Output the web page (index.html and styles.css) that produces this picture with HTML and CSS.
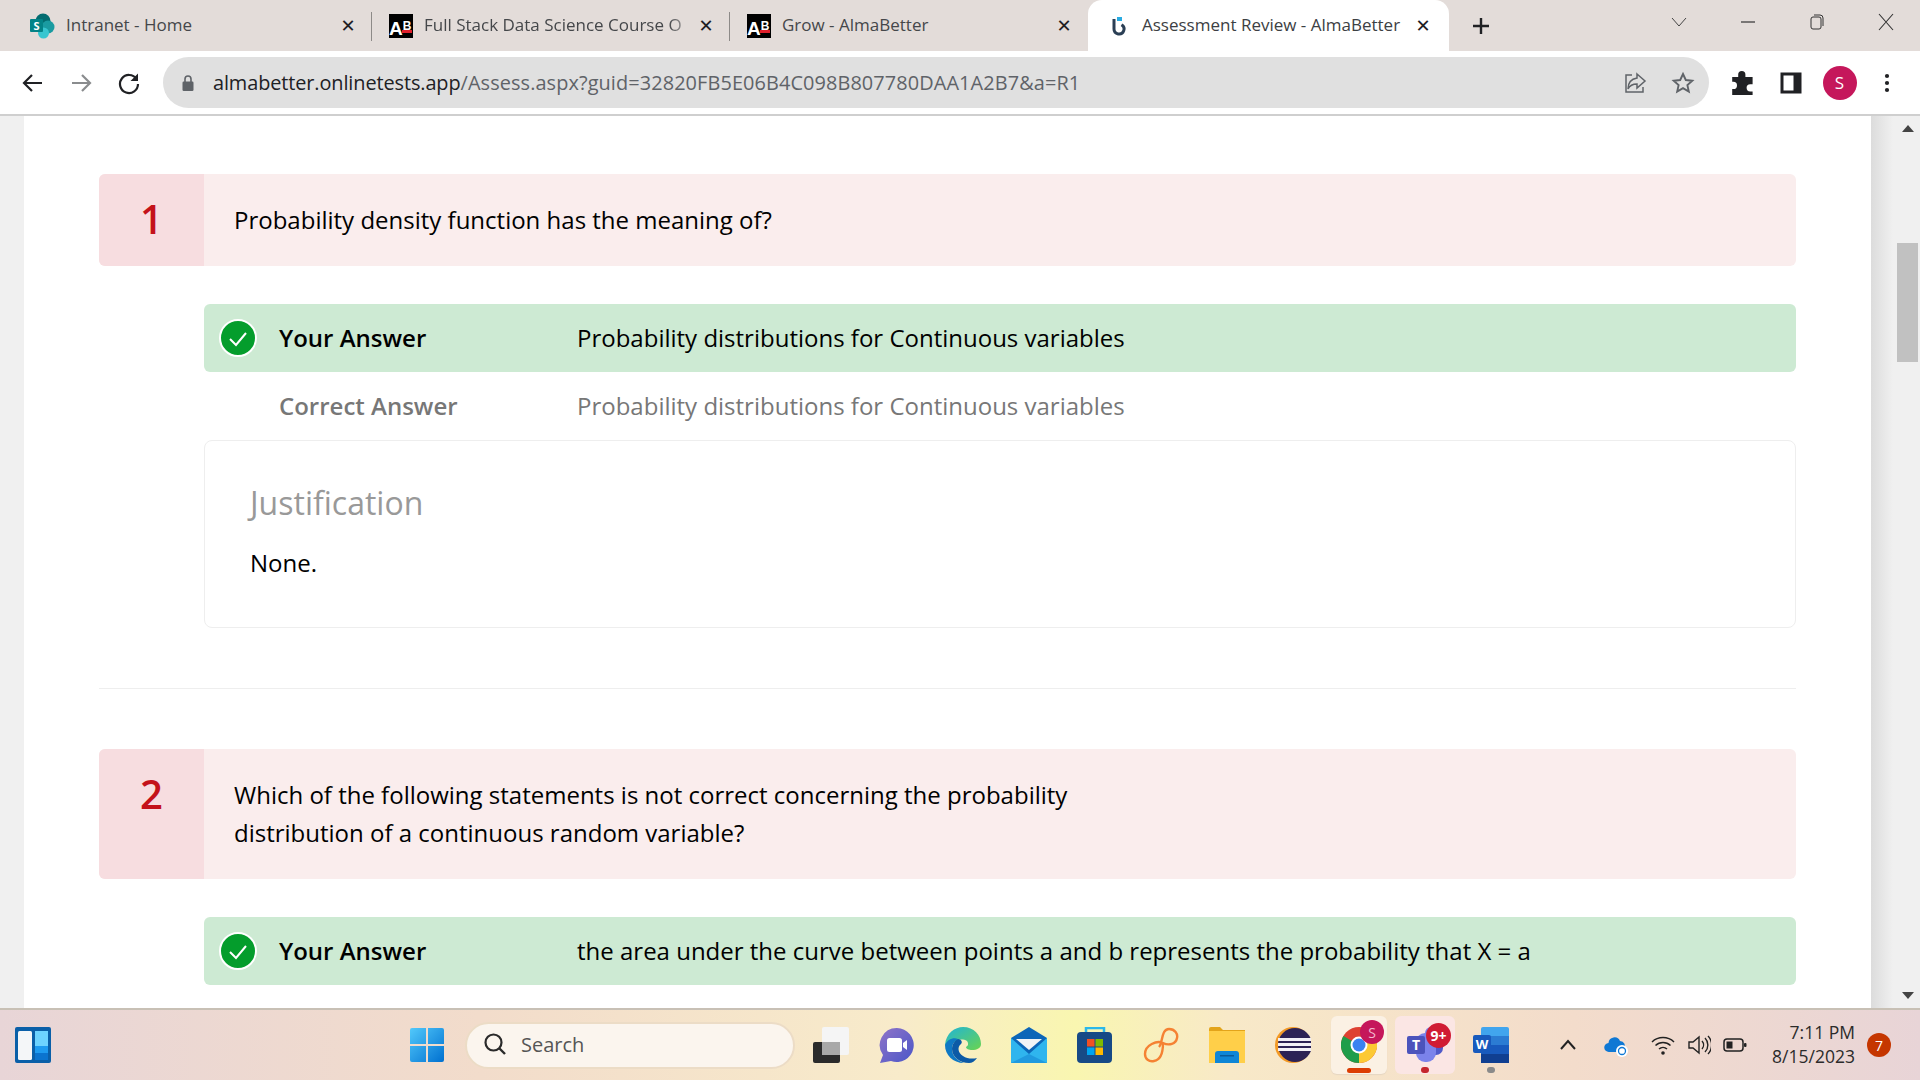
FILE: index.html
```html
<!DOCTYPE html>
<html lang="en">
<head>
    <meta charset="UTF-8">
    <title>Assessment Review - AlmaBetter</title>
    <link rel="stylesheet" href="styles.css">
</head>
<body>
    <div class="tab-strip">
        <div class="tab">
            <svg class="favicon" viewBox="0 0 26 26"><circle cx="14" cy="8" r="7.5" fill="#036c70"/><circle cx="19" cy="14" r="6.5" fill="#1a9ba1"/><circle cx="14.5" cy="20" r="5.5" fill="#37c6d0"/><rect x="1" y="6" width="13" height="13" rx="1" fill="#038387"/><text x="7.5" y="16.5" class="svg-letter" font-size="11" fill="#fff">S</text></svg>
            <span class="tab-title">Intranet - Home</span>
            <span class="tab-close">✕</span>
        </div>
        <div class="tab">
            <span class="ab-icon">A<span class="ab-b">B</span></span>
            <span class="tab-title fade">Full Stack Data Science Course O</span>
            <span class="tab-close">✕</span>
        </div>
        <div class="tab no-sep">
            <span class="ab-icon">A<span class="ab-b">B</span></span>
            <span class="tab-title">Grow - AlmaBetter</span>
            <span class="tab-close">✕</span>
        </div>
        <div class="tab active">
            <svg class="favicon small" viewBox="0 0 16 20"><path d="M3 3v10a5 5 0 1 0 7.500-4.300" fill="none" stroke="#2b3f55" stroke-width="3"/><rect x="6" y="1" width="5" height="4" fill="#29abe2"/></svg>
            <span class="tab-title">Assessment Review - AlmaBetter</span>
            <span class="tab-close">✕</span>
        </div>
        <svg class="new-tab" viewBox="0 0 20 20"><path d="M10 2v16M2 10h16" stroke="#202124" stroke-width="2.4"/></svg>
        <div class="window-controls">
            <svg class="win-chevron" viewBox="0 0 16 10"><path d="M1 1l7 8 7-8" fill="none" stroke="#444" stroke-width="1"/></svg>
            <svg class="win-btn" viewBox="0 0 18 18"><path d="M2 9h14" stroke="#333" stroke-width="1.2"/></svg>
            <svg class="win-btn" viewBox="0 0 18 18"><rect x="3" y="4" width="10" height="12" rx="2" fill="none" stroke="#333"/><path d="M6 2h6a3 3 0 0 1 3 3v8" fill="none" stroke="#333"/></svg>
            <svg class="win-btn" viewBox="0 0 18 18"><path d="M2 1l14 16M16 1L2 17" stroke="#333" stroke-width="1.1"/></svg>
        </div>
    </div>

    <div class="toolbar">
        <div class="tool-btn"><svg viewBox="0 0 24 24"><path d="M21 12H4M11 4l-8 8 8 8" fill="none" stroke="#202124" stroke-width="2.2"/></svg></div>
        <div class="tool-btn"><svg viewBox="0 0 24 24"><path d="M3 12h17M13 4l8 8-8 8" fill="none" stroke="#8a8c8e" stroke-width="2.2"/></svg></div>
        <div class="tool-btn"><svg viewBox="0 0 24 24"><path d="M19.5 8A9 9 0 1 0 21 13" fill="none" stroke="#202124" stroke-width="2.2"/><path d="M21 2.5V10h-7.5z" fill="#202124"/></svg></div>
        <div class="address-bar">
            <svg class="lock" viewBox="0 0 14 18"><path d="M4 8V5a3 3 0 0 1 6 0v3" fill="none" stroke="#5f6368" stroke-width="1.6"/><rect x="1.5" y="7.5" width="11" height="9.5" rx="1.2" fill="#5f6368"/></svg>
            <span class="url"><span class="url-host">almabetter.onlinetests.app</span>/Assess.aspx?guid=32820FB5E06B4C098B807780DAA1A2B7&amp;a=R1</span>
            <div class="tool-btn"><svg viewBox="0 0 24 24"><path d="M9 4H3v17h17v-5" fill="none" stroke="#5f6368" stroke-width="1.5"/><path d="M14 3l8 7-8 7v-4c-4 0-7 1-9 5 0-6 3-10 9-11z" fill="none" stroke="#5f6368" stroke-width="1.5"/></svg></div>
            <div class="tool-btn"><svg viewBox="0 0 24 24"><path d="M12 3l2.8 6 6.5.7-4.9 4.4 1.4 6.4L12 17.200l-5.800 3.300 1.400-6.400-4.900-4.400 6.500-.7z" fill="none" stroke="#5f6368" stroke-width="1.900"/></svg></div>
        </div>
        <div class="tool-btn"><svg viewBox="2 2 20 20"><path d="M3 7h5V5a3 3 0 0 1 6 0v2h6v6h-2a3 3 0 0 0 0 6h2v3H3v-5h1a3 3 0 0 0 0-6H3z" fill="#202124"/></svg></div>
        <div class="tool-btn"><svg viewBox="0 0 24 24"><rect x="1.500" y="1.500" width="21" height="21" fill="#202124"/><rect x="4.500" y="4.500" width="10" height="15" fill="#fff"/></svg></div>
        <div class="tool-btn"><span class="avatar">S</span></div>
        <div class="tool-btn"><svg viewBox="0 0 24 24"><circle cx="12" cy="5" r="2.100" fill="#202124"/><circle cx="12" cy="12" r="2.100" fill="#202124"/><circle cx="12" cy="19" r="2.100" fill="#202124"/></svg></div>
    </div>

    <div class="viewport">
        <div class="gutter"></div>
        <div class="page">
            <div class="question">
                <div class="q-num">1</div>
                <div class="q-text">Probability density function has the meaning of?</div>
            </div>
            <div class="answers">
                <div class="answer-row picked">
                    <div class="answer-icon"><svg viewBox="0 0 38 38"><circle cx="19" cy="19" r="18" fill="#049d2c" stroke="#fff" stroke-width="2"/><path d="M11 20l6 6 10-12" fill="none" stroke="#fff" stroke-width="2"/></svg></div>
                    <div class="answer-label">Your Answer</div>
                    <div class="answer-value">Probability distributions for Continuous variables</div>
                </div>
                <div class="answer-row correct">
                    <div class="answer-icon"></div>
                    <div class="answer-label">Correct Answer</div>
                    <div class="answer-value">Probability distributions for Continuous variables</div>
                </div>
                <div class="justification">
                    <h3>Justification</h3>
                    <p>None.</p>
                </div>
            </div>
            <hr class="divider">
            <div class="question">
                <div class="q-num">2</div>
                <div class="q-text">Which of the following statements is not correct concerning the probability<br>distribution of a continuous random variable?</div>
            </div>
            <div class="answers">
                <div class="answer-row picked">
                    <div class="answer-icon"><svg viewBox="0 0 38 38"><circle cx="19" cy="19" r="18" fill="#049d2c" stroke="#fff" stroke-width="2"/><path d="M11 20l6 6 10-12" fill="none" stroke="#fff" stroke-width="2"/></svg></div>
                    <div class="answer-label">Your Answer</div>
                    <div class="answer-value">the area under the curve between points a and b represents the probability that X = a</div>
                </div>
            </div>
        </div>
        <div class="scrollbar">
            <span class="arrow up"></span>
            <div class="thumb"></div>
            <span class="arrow down"></span>
        </div>
    </div>

    <div class="taskbar">
        <svg class="widgets" viewBox="0 0 36 36"><rect width="36" height="36" rx="2" fill="#0a5fa8"/><rect x="3" y="4" width="14" height="29" rx="1.500" fill="#f4f6f8"/><rect x="20" y="4" width="13" height="15" fill="#6dd3ff"/><rect x="20" y="19" width="13" height="7" fill="#1e9bf0"/><rect x="20" y="26" width="13" height="7" fill="#0b74cf"/></svg>
        <div class="slot start">
            <svg class="app" viewBox="0 0 36 36"><defs><linearGradient id="win" x1="0" y1="0" x2="1" y2="1"><stop offset="0" stop-color="#52c9fb"/><stop offset="1" stop-color="#0070d0"/></linearGradient></defs><path d="M1 3a2 2 0 0 1 2-2h14v16H1zM19 1h14a2 2 0 0 1 2 2v14H19zM1 19h16v16H3a2 2 0 0 1-2-2zM19 19h16v14a2 2 0 0 1-2 2H19z" fill="url(#win)"/></svg>
        </div>
        <div class="search-box">
            <svg viewBox="0 0 24 24"><circle cx="10.500" cy="10.500" r="8" fill="none" stroke="#2a2a2a" stroke-width="2.200"/><path d="M16.500 16.500l5.500 5.500" stroke="#2a2a2a" stroke-width="2.400"/></svg>
            <span>Search</span>
        </div>
        <div class="slot"><svg class="app" viewBox="0 0 36 36"><rect x="0" y="15" width="27" height="21" rx="2" fill="#2b2b2b"/><rect x="9" y="0" width="27" height="28" rx="2" fill="#f5f5f5"/><rect x="9" y="15" width="18" height="13" fill="#a8a8a8"/></svg></div>
        <div class="slot"><svg class="app" viewBox="0 0 36 36"><defs><linearGradient id="chat" x1="0" y1="0" x2="1" y2="1"><stop offset="0" stop-color="#8f74c8"/><stop offset="1" stop-color="#4a56c8"/></linearGradient></defs><path d="M18 1a17 17 0 1 1-6 33l-11 2 3-8A17 17 0 0 1 18 1z" fill="url(#chat)"/><rect x="8" y="11" width="15" height="14" rx="2.500" fill="#fff"/><path d="M24 16l4-3v10l-4-3z" fill="#fff"/></svg></div>
        <div class="slot"><svg class="app" viewBox="0 0 36 36"><defs><linearGradient id="edge" x1="0" y1="0" x2="1" y2="1"><stop offset="0" stop-color="#1fb4d8"/><stop offset="1" stop-color="#6ad44f"/></linearGradient></defs><path d="M0 18C1 6 10 0 18 0c11 0 18 8 18 17 0 4-4 6-9 6-3 0-6-1-6-3 2-1 3-3 1-6-5-3-12-1-15 3z" fill="url(#edge)"/><path d="M0 18c2-5 8-8 13-6-4 2-6 6-6 10 0 6 4 11 12 14C8 36 0 28 0 18z" fill="#0f78c4"/><path d="M13 12c-4 2-6 6-6 10 0 8 8 14 17 14 3 0 6-2 8-5-4 1-10 1-14-2-5-3-6-9-2-12 2-2 0-5-3-5z" fill="#0c5aa6"/></svg></div>
        <div class="slot"><svg class="app" viewBox="0 0 36 36"><path d="M18 0l18 11v25H0V11z" fill="#0c66b8"/><path d="M5 12h26l-13 11z" fill="#f2f4f6"/><path d="M0 11l18 16 18-16v25H0z" fill="#2fb5ee"/><path d="M0 36l18-9 18 9z" fill="#1a8fd8" opacity=".7"/></svg></div>
        <div class="slot"><svg class="app" viewBox="0 0 36 36"><path d="M9 7V1h18v6" fill="none" stroke="#2bb8ea" stroke-width="2.500"/><rect y="5" width="35" height="31" rx="4" fill="#174a86"/><rect x="10" y="12" width="7.500" height="7.500" fill="#f25022"/><rect x="18.500" y="12" width="7.500" height="7.500" fill="#7fba00"/><rect x="10" y="20.500" width="7.500" height="7.500" fill="#00a4ef"/><rect x="18.500" y="20.500" width="7.500" height="7.500" fill="#ffb900"/></svg></div>
        <div class="slot"><svg class="app" viewBox="0 0 36 36"><path d="M16 20C20 16 18 2 26 2c6 0 9 5 8 9-1 6-8 8-14 5C14 13 2 18 2 27c0 5 4 8 9 7 6-1 9-8 9-18" fill="none" stroke="#f58233" stroke-width="2.400"/></svg></div>
        <div class="slot"><svg class="app" viewBox="0 0 36 36"><path d="M0 2a2 2 0 0 1 2-2h9l3 3h22v33H0z" fill="#e3a41a"/><rect y="4" width="36" height="32" fill="#ffcf49"/><rect x="6" y="24" width="30" height="12" fill="#ffcf49"/><path d="M6 36V27a3 3 0 0 1 3-3h18a3 3 0 0 1 3 3v9z" fill="#0f86d6"/><rect x="11" y="28" width="14" height="1.500" fill="#0a5b99"/></svg></div>
        <div class="slot"><svg class="app" viewBox="0 0 36 36"><circle cx="18" cy="18" r="18" fill="#f39a26"/><circle cx="20" cy="18" r="17" fill="#2c2255"/><rect x="3" y="11" width="33" height="3" fill="#f2f0f6"/><rect x="3" y="16" width="33" height="3" fill="#f2f0f6"/><rect x="3" y="21" width="33" height="3" fill="#f2f0f6"/></svg></div>
        <div class="slot open active-app">
            <svg class="app" viewBox="0 0 36 36"><circle cx="18" cy="18" r="18" fill="#de4132"/><path d="M18 18L33.600 9A18 18 0 0 1 18 36z" fill="#fcc934"/><path d="M18 18L18 36A18 18 0 0 1 2.400 9z" fill="#1e9d4a"/><circle cx="18" cy="18" r="8.500" fill="#fff"/><circle cx="18" cy="18" r="6.500" fill="#3b82f0"/></svg>
            <span class="badge badge-s">S</span>
            <span class="indicator wide"></span>
        </div>
        <div class="slot open teams-app">
            <svg class="app" viewBox="0 0 36 36"><circle cx="24" cy="6" r="6" fill="#7b83eb"/><rect x="19" y="8" width="17" height="20" rx="7" fill="#5059c9"/><rect x="9" y="6" width="20" height="29" rx="9" fill="#7b83eb"/><rect x="0" y="9" width="18" height="18" rx="2" fill="#4b53bc"/><text x="9" y="23" class="svg-letter" font-size="14" fill="#fff">T</text></svg>
            <span class="badge badge-nine">9+</span>
            <span class="indicator dot red"></span>
        </div>
        <div class="slot open">
            <svg class="app" viewBox="0 0 36 36"><rect x="8" y="0" width="28" height="36" rx="2" fill="#41a5ee"/><rect x="8" y="9" width="28" height="9" fill="#2b7cd3"/><rect x="8" y="18" width="28" height="9" fill="#185abd"/><rect x="8" y="27" width="28" height="9" fill="#103f91"/><rect y="8" width="18" height="18" rx="2" fill="#185abd"/><text x="9" y="22" class="svg-letter" font-size="13" fill="#fff">W</text></svg>
            <span class="indicator dot"></span>
        </div>
        <div class="tray">
            <svg class="tray-icon chevron" viewBox="0 0 24 24"><path d="M5 16l7-8 7 8" fill="none" stroke="#222" stroke-width="2"/></svg>
            <svg class="tray-icon cloud" viewBox="0 0 24 24"><path d="M5 19a4.500 4.500 0 0 1-.5-9A6 6 0 0 1 16 8a5 5 0 0 1 4 8v3z" fill="#0f78d4"/><circle cx="18" cy="18" r="6" fill="#fff"/><circle cx="18" cy="18" r="3.500" fill="none" stroke="#0f78d4" stroke-width="1.300"/></svg>
            <svg class="tray-icon" viewBox="0 0 24 24"><path d="M1 9a16 16 0 0 1 22 0M4.500 12.500a11 11 0 0 1 15 0M8 16a6 6 0 0 1 8 0" fill="none" stroke="#222" stroke-width="1.500"/><circle cx="12" cy="20" r="1.800" fill="#222"/></svg>
            <svg class="tray-icon" viewBox="0 0 24 24"><path d="M2 9h4l6-5v16l-6-5H2z" fill="none" stroke="#222" stroke-width="1.400"/><path d="M15 8a6 6 0 0 1 0 8M18 5a10 10 0 0 1 0 14M21 3a13 13 0 0 1 0 18" fill="none" stroke="#222" stroke-width="1.400"/></svg>
            <svg class="tray-icon" viewBox="0 0 24 24"><rect x="1" y="6" width="19" height="12" rx="3" fill="none" stroke="#222" stroke-width="1.500"/><rect x="3.500" y="8.500" width="6" height="7" fill="#222"/><rect x="21" y="10" width="2.500" height="4" rx="1" fill="#222"/></svg>
        </div>
        <div class="clock">
            <span>7:11 PM</span>
            <span>8/15/2023</span>
        </div>
        <span class="notify">7</span>
    </div>
</body>
</html>
```

FILE: styles.css
```css
* {
    box-sizing: border-box;
}

html, body {
    height: 100%;
}

body {
    margin: 0;
    display: flex;
    flex-direction: column;
    overflow: hidden;
    background-color: #ffffff;
    color: #000000;
    font-family: "Open Sans", sans-serif;
}

/* browser tabs */
.tab-strip {
    display: flex;
    align-items: center;
    height: 51px;
    flex: none;
    padding-left: 14px;
    background-color: #e3dcd9;
}

.tab {
    position: relative;
    display: flex;
    align-items: center;
    width: 358px;
    height: 51px;
    padding: 0 14px 0 15px;
    font-size: 17px;
    color: #45474a;
}

.tab::after {
    content: "";
    position: absolute;
    right: 0;
    top: 12px;
    height: 29px;
    width: 1px;
    background-color: #8d8a88;
}

.tab.no-sep::after {
    display: none;
}

.tab.active {
    width: 361px;
    padding: 0 16px 0 23px;
    background-color: #ffffff;
    border-radius: 14px 14px 0 0;
    color: #3c4043;
}

.tab.active::after {
    display: none;
}

.favicon {
    width: 26px;
    height: 26px;
    flex: none;
}

.favicon.small {
    width: 16px;
    height: 20px;
}

.ab-icon {
    position: relative;
    width: 24px;
    height: 24px;
    flex: none;
    margin-left: 2px;
    background-color: #000000;
    color: #ffffff;
    font-family: "Liberation Sans", sans-serif;
    font-weight: bold;
    font-size: 19px;
    line-height: 24px;
    letter-spacing: -1px;
    white-space: nowrap;
}

.ab-b {
    font-size: 12px;
    vertical-align: 5px;
    margin-left: 1px;
}

.ab-icon::after {
    content: "";
    position: absolute;
    right: 1px;
    bottom: 5px;
    width: 10px;
    height: 3px;
    background-color: #e0202c;
}

.tab-title {
    flex: 1;
    min-width: 0;
    margin-left: 11px;
    padding-bottom: 2px;
    white-space: nowrap;
}

.favicon.small + .tab-title {
    margin-left: 15px;
}

.tab-title.fade {
    -webkit-mask-image: linear-gradient(90deg, #000 90%, transparent 100%);
    mask-image: linear-gradient(90deg, #000 90%, transparent 100%);
}

.tab-close {
    flex: none;
    width: 20px;
    text-align: center;
    font-family: "DejaVu Sans", sans-serif;
    font-size: 18px;
    font-weight: bold;
    color: #202124;
}

.new-tab {
    width: 20px;
    height: 20px;
    margin-left: 22px;
    flex: none;
}

.window-controls {
    display: flex;
    align-items: center;
    margin-left: auto;
    padding-right: 25px;
    padding-bottom: 8px;
}

.win-chevron {
    width: 16px;
    height: 10px;
    margin-right: 52px;
}

.win-btn {
    width: 18px;
    height: 18px;
    margin-left: 51px;
}

.win-chevron + .win-btn {
    margin-left: 0;
}

/* address bar row */
.toolbar {
    display: flex;
    align-items: center;
    height: 65px;
    flex: none;
    padding: 0 9px;
    background-color: #ffffff;
    border-bottom: 2px solid #cfcfcf;
}

.tool-btn {
    display: flex;
    align-items: center;
    justify-content: center;
    width: 48px;
    height: 48px;
    flex: none;
}

.tool-btn svg {
    width: 24px;
    height: 24px;
}

.address-bar {
    display: flex;
    align-items: center;
    flex: 1;
    height: 51px;
    margin: 0 10px;
    padding: 0 2px 0 18px;
    background-color: #e0e0e0;
    border-radius: 26px;
}

.lock {
    width: 14px;
    height: 18px;
    flex: none;
}

.url {
    flex: 1;
    margin-left: 18px;
    font-size: 19.9px;
    letter-spacing: 0.1px;
    color: #5f6368;
    white-space: nowrap;
}

.url-host {
    color: #202124;
    letter-spacing: -0.1px;
}

.avatar {
    display: flex;
    align-items: center;
    justify-content: center;
    width: 34px;
    height: 34px;
    margin-left: 1px;
    border-radius: 50%;
    background-color: #c5175b;
    color: #ffffff;
    font-size: 17px;
}

/* page */
.viewport {
    display: flex;
    flex: 1;
    min-height: 0;
}

.gutter {
    width: 24px;
    flex: none;
    background-color: #f0f0f0;
}

.page {
    flex: 1;
    min-width: 0;
    padding: 58px 75px 0;
    overflow: hidden;
    background-color: #ffffff;
}

.question {
    display: flex;
    background-color: #faeded;
    border-radius: 6px;
    overflow: hidden;
}

.q-num {
    width: 105px;
    flex: none;
    padding-top: 26px;
    background-color: #f7dde0;
    color: #c4121a;
    font-size: 40px;
    font-weight: 600;
    line-height: 38px;
    text-align: center;
}

.q-text {
    padding: 27px 30px;
    font-size: 24px;
    line-height: 38px;
}

.answers {
    margin: 38px 0 0 105px;
}

.answer-row {
    display: flex;
    align-items: center;
    height: 68px;
    border-radius: 6px;
    font-size: 24px;
}

.answer-row.picked {
    background-color: #cdead3;
}

.answer-row.correct {
    color: #777777;
}

.answer-icon {
    width: 75px;
    flex: none;
    padding-left: 15px;
    line-height: 0;
}

.answer-icon svg {
    width: 38px;
    height: 38px;
}

.answer-label,
.answer-value {
    padding-bottom: 2px;
}

.answer-label {
    width: 298px;
    flex: none;
    font-weight: 600;
}

.justification {
    height: 188px;
    padding: 40px 45px 0;
    border: 1px solid #eeeeee;
    border-radius: 8px;
}

.justification h3 {
    margin: 0;
    font-size: 32px;
    font-weight: 400;
    line-height: 44px;
    color: #999999;
}

.justification p {
    margin: 19px 0 0;
    font-size: 24px;
    line-height: 38px;
}

.divider {
    margin: 60px 0;
    border: none;
    border-top: 1px solid #eeeeee;
}

/* scrollbar */
.scrollbar {
    display: flex;
    flex-direction: column;
    align-items: center;
    width: 49px;
    flex: none;
    padding: 9px 2px 9px 26px;
    background: linear-gradient(90deg, #dcdcdc 0, #f0f0f0 22px);
}

.arrow {
    width: 0;
    height: 0;
    border-left: 6px solid transparent;
    border-right: 6px solid transparent;
}

.arrow.up {
    border-bottom: 7px solid #444444;
}

.arrow.down {
    margin-top: auto;
    border-top: 7px solid #444444;
}

.thumb {
    width: 21px;
    height: 119px;
    margin-top: 111px;
    background-color: #c1c1c1;
}

/* windows taskbar */
.taskbar {
    display: flex;
    align-items: center;
    height: 72px;
    flex: none;
    padding-left: 15px;
    border-top: 2px solid #c8c0b5;
    background: linear-gradient(90deg, #e8d5d7 0, #f2dccb 25%, #f8ebca 47%, #f9f6b0 56%, #f8e9c8 64%, #f3dccb 82%, #e8d4d7 100%);
}

.widgets {
    width: 36px;
    height: 36px;
    flex: none;
}

.slot {
    position: relative;
    display: flex;
    align-items: center;
    justify-content: center;
    width: 66px;
    height: 58px;
    flex: none;
    border-radius: 6px;
}

.slot.start {
    margin-left: 343px;
}

.app {
    width: 36px;
    height: 36px;
}

.search-box {
    display: flex;
    align-items: center;
    width: 330px;
    height: 47px;
    flex: none;
    margin: 0 3px 0 5px;
    padding: 0 0 2px 16px;
    background-color: #fbf5ee;
    border: 2px solid #ecdcc6;
    border-radius: 24px;
    font-size: 20px;
    color: #555555;
}

.search-box svg {
    width: 24px;
    height: 24px;
    margin-right: 14px;
}

.active-app {
    background-color: #fbf1e4;
    box-shadow: 0 1px 1px #e6d6c2;
    width: 56px;
    margin: 0 5px;
}

.teams-app {
    background-color: #fbe6e4;
    width: 60px;
    margin: 0 3px;
}

.badge {
    position: absolute;
    display: flex;
    align-items: center;
    justify-content: center;
    border-radius: 50%;
    color: #ffffff;
    background-color: #c5175b;
    font-size: 14px;
}

.badge-s {
    top: 4px;
    right: 3px;
    width: 24px;
    height: 24px;
    color: #f3b8cf;
}

.badge-nine {
    top: 7px;
    right: 4px;
    width: 25px;
    height: 25px;
    background-color: #d01c34;
    font-weight: 700;
}

.indicator {
    position: absolute;
    bottom: 1px;
    height: 5px;
    border-radius: 3px;
}

.indicator.wide {
    width: 24px;
    background-color: #dc3d03;
}

.indicator.dot {
    width: 8px;
    height: 6px;
    background-color: #8a8a8a;
}

.indicator.dot.red {
    background-color: #c4262e;
}

.tray {
    display: flex;
    align-items: center;
    gap: 12px;
    margin-left: 32px;
}

.tray-icon {
    width: 24px;
    height: 24px;
    flex: none;
}

.chevron {
    margin-right: 12px;
}

.cloud {
    margin-right: 11px;
}

.clock {
    display: flex;
    flex-direction: column;
    align-items: flex-end;
    width: 108px;
    flex: none;
    padding-bottom: 2px;
    font-size: 17.5px;
    line-height: 24px;
    color: #2b2b2b;
}

.notify {
    display: flex;
    align-items: center;
    justify-content: center;
    width: 24px;
    height: 24px;
    margin-left: 12px;
    flex: none;
    border-radius: 50%;
    background-color: #c53600;
    color: #ffffff;
    font-size: 14px;
}

.svg-letter {
    font-family: "Open Sans", sans-serif;
    font-weight: 700;
    text-anchor: middle;
}
```
